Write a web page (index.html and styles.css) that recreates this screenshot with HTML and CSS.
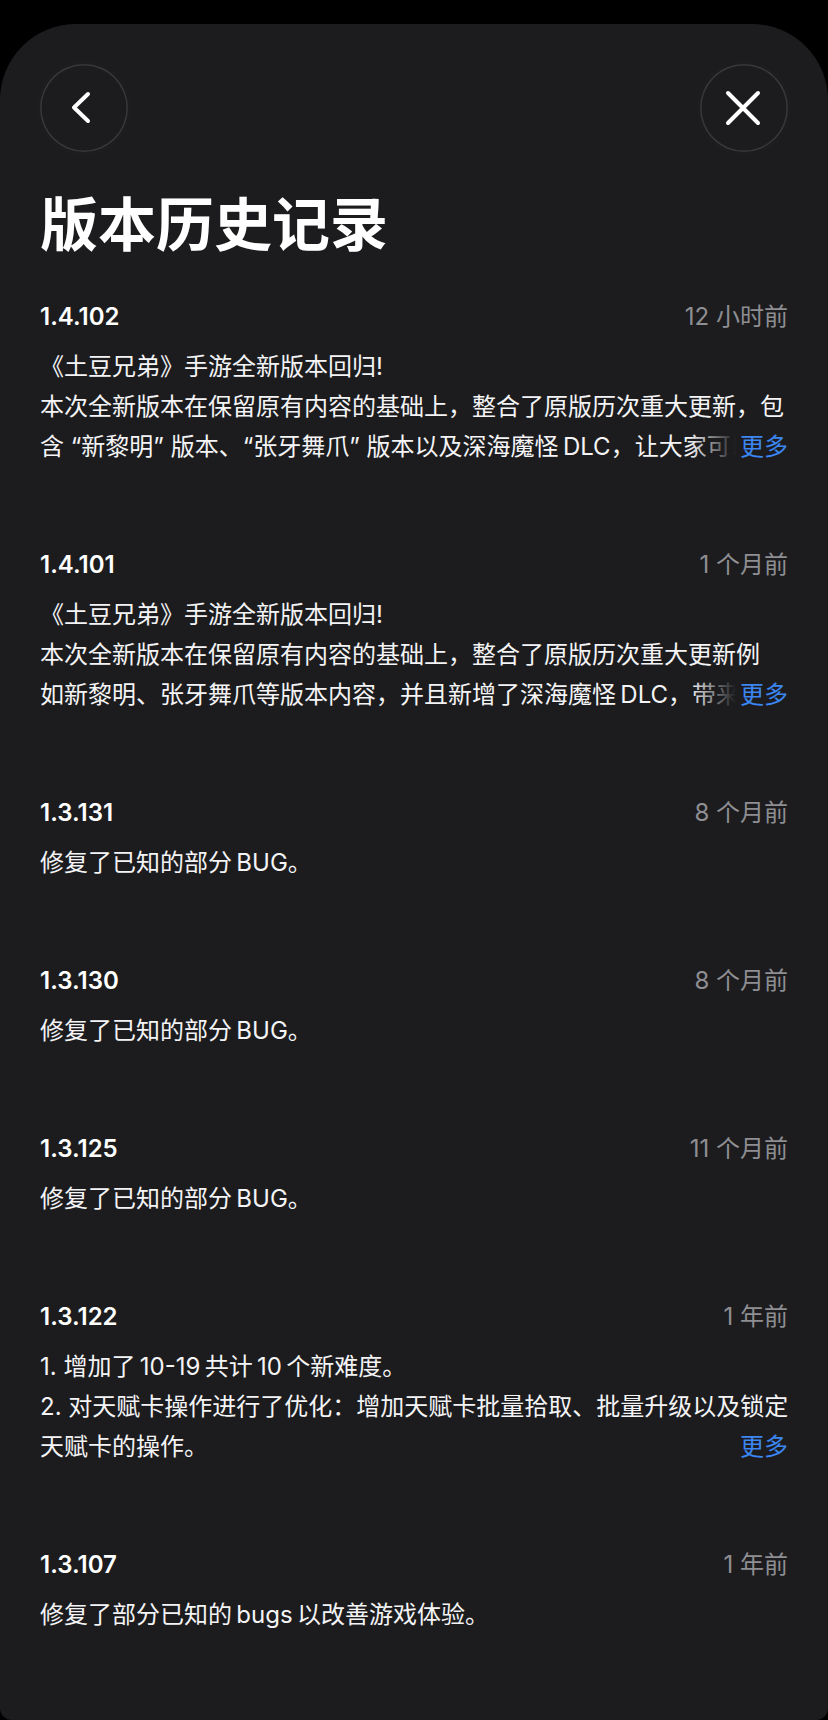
FILE: index.html
```html
<!DOCTYPE html>
<html lang="zh-CN">
<head>
<meta charset="utf-8">
<title>版本历史记录</title>
<link rel="stylesheet" href="styles.css">
</head>
<body>
<div class="sheet">
  <div class="topbar">
    <div class="circle-btn">
      <svg width="88" height="88" viewBox="0 0 88 88"><path d="M48 30 L34 43.5 L48 57" fill="none" stroke="#fff" stroke-width="4" stroke-linecap="round" stroke-linejoin="round"/></svg>
    </div>
    <div class="circle-btn">
      <svg width="88" height="88" viewBox="0 0 88 88"><path d="M28 29 L58 59 M58 29 L28 59" fill="none" stroke="#fff" stroke-width="4" stroke-linecap="round"/></svg>
    </div>
  </div>
  <h1 class="title">版本历史记录</h1>
  <div class="list">
    <div class="entry">
      <div class="entry-head"><span class="ver">1.4.102</span><span class="time">12 小时前</span></div>
      <div class="entry-body">《土豆兄弟》手游全新版本回归!<br>本次全新版本在保留原有内容的基础上，整合了原版历次重大更新，包含 “新黎明” 版本、“张牙舞爪” 版本以及深海魔怪&thinsp;DLC，让大家可以<span class="more">更多</span></div>
    </div>
    <div class="entry">
      <div class="entry-head"><span class="ver">1.4.101</span><span class="time">1 个月前</span></div>
      <div class="entry-body">《土豆兄弟》手游全新版本回归!<br>本次全新版本在保留原有内容的基础上，整合了原版历次重大更新例<br>如新黎明、张牙舞爪等版本内容，并且新增了深海魔怪&thinsp;DLC，带来<span class="more">更多</span></div>
    </div>
    <div class="entry">
      <div class="entry-head"><span class="ver">1.3.131</span><span class="time">8 个月前</span></div>
      <div class="entry-body">修复了已知的部分&thinsp;BUG。</div>
    </div>
    <div class="entry">
      <div class="entry-head"><span class="ver">1.3.130</span><span class="time">8 个月前</span></div>
      <div class="entry-body">修复了已知的部分&thinsp;BUG。</div>
    </div>
    <div class="entry">
      <div class="entry-head"><span class="ver">1.3.125</span><span class="time">11 个月前</span></div>
      <div class="entry-body">修复了已知的部分&thinsp;BUG。</div>
    </div>
    <div class="entry">
      <div class="entry-head"><span class="ver">1.3.122</span><span class="time">1 年前</span></div>
      <div class="entry-body">1. 增加了&thinsp;10-19&thinsp;共计&thinsp;10&thinsp;个新难度。<br><span class="nowrap">2. 对天赋卡操作进行了优化：增加天赋卡批量拾取、批量升级以及锁定</span><br>天赋卡的操作。<span class="more">更多</span></div>
    </div>
    <div class="entry">
      <div class="entry-head"><span class="ver">1.3.107</span><span class="time">1 年前</span></div>
      <div class="entry-body">修复了部分已知的&thinsp;bugs&thinsp;以改善游戏体验。</div>
    </div>
  </div>
</div>
</body>
</html>
```
FILE: styles.css
```css
html, body {
  margin: 0;
  padding: 0;
  background: #000;
}
body {
  font-family: "Inter", "Noto Sans CJK SC", sans-serif;
  color: #fff;
}
.sheet {
  margin-top: 24px;
  min-height: 1696px;
  box-sizing: border-box;
  background: #1c1c1e;
  border-radius: 76px 76px 12px 12px;
  padding: 40px 40px 0;
  overflow: hidden;
}
.topbar {
  display: flex;
  justify-content: space-between;
}
.circle-btn {
  width: 88px;
  height: 88px;
  border-radius: 50%;
  background: #1c1c1e;
  box-shadow: inset 0 0 0 1.5px #38383b, 0 0 26px 10px rgba(255, 255, 255, 0.012);
  display: flex;
  align-items: center;
  justify-content: center;
}
.circle-btn svg {
  display: block;
}
.title {
  margin: 38px 0 0;
  font-size: 58px;
  line-height: 70px;
  font-weight: 700;
  color: #fff;
  white-space: nowrap;
}
.list {
  margin-top: 40px;
  display: flex;
  flex-direction: column;
  gap: 81px;
}
.entry-head {
  display: flex;
  justify-content: space-between;
  align-items: baseline;
  height: 34px;
  line-height: 34px;
  font-size: 24px;
}
.ver {
  font-weight: 600;
  color: #fff;
}
.time {
  color: #8e8e93;
}
.entry-body {
  margin-top: 13px;
  font-size: 24px;
  line-height: 40px;
  color: #f4f4f6;
  position: relative;
  max-height: 120px;
  overflow: hidden;
}
.nowrap {
  white-space: nowrap;
}
.more {
  position: absolute;
  right: 0;
  bottom: 0;
  padding-left: 50px;
  background: linear-gradient(to right, rgba(28, 28, 30, 0), #1c1c1e 46px);
  color: #3b86f0;
}
```
